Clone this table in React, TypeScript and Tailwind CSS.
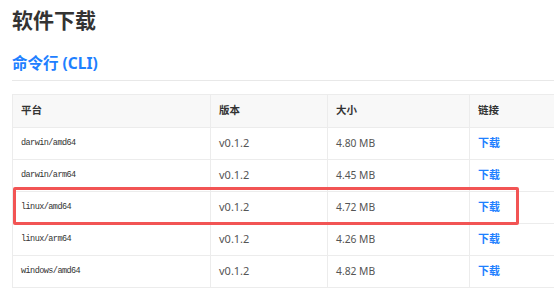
import React from 'react';

interface Release {
  platform: string;
  version: string;
  size: string;
}

const releases: Release[] = [
  { platform: 'darwin/amd64', version: 'v0.1.2', size: '4.80 MB' },
  { platform: 'darwin/arm64', version: 'v0.1.2', size: '4.45 MB' },
  { platform: 'linux/amd64', version: 'v0.1.2', size: '4.72 MB' },
  { platform: 'linux/arm64', version: 'v0.1.2', size: '4.26 MB' },
  { platform: 'windows/amd64', version: 'v0.1.2', size: '4.82 MB' },
];

export default function App() {
  return (
    <div
      className="relative w-[554px] h-[306px] overflow-hidden bg-white pl-3"
      style={{ fontFamily: '"Noto Sans", "Noto Sans CJK SC", sans-serif' }}
    >
      <h1 className="pt-[6px] text-[21px] leading-[28px] font-bold text-[#333]">软件下载</h1>
      <h2 className="mt-[17px] text-[15.5px] leading-[24px] font-bold text-[#1e80ff]">命令行 (CLI)</h2>
      <div className="mt-[5px] h-px w-[560px] bg-[#e8e8e8]" />

      <table className="mt-[13px] w-[600px] table-fixed border-collapse text-[#333]">
        <colgroup>
          <col className="w-[198px]" />
          <col className="w-[117px]" />
          <col className="w-[142px]" />
          <col className="w-[143px]" />
        </colgroup>
        <thead>
          <tr className="h-[33px] bg-[#f8f8f8]">
            <th className="border border-[#ececec] px-2 text-left text-[10.5px] font-bold">平台</th>
            <th className="border border-[#ececec] px-2 text-left text-[10.5px] font-bold">版本</th>
            <th className="border border-[#ececec] px-2 text-left text-[10.5px] font-bold">大小</th>
            <th className="border border-[#ececec] px-2 text-left text-[10.5px] font-bold">链接</th>
          </tr>
        </thead>
        <tbody>
          {releases.map((r) => (
            <tr key={r.platform} className="h-[32px]">
              <td
                className="border border-[#ececec] px-2 text-[8.5px] tracking-[-0.55px] text-[#333]"
                style={{ fontFamily: '"Liberation Mono", "DejaVu Sans Mono", monospace' }}
              >
                {r.platform}
              </td>
              <td className="border border-[#ececec] px-2 text-[11px] text-[#555]">{r.version}</td>
              <td className="border border-[#ececec] px-2 text-[10.3px] text-[#555]">{r.size}</td>
              <td className="border border-[#ececec] px-2 text-[11px] font-bold text-[#1e80ff]">下载</td>
            </tr>
          ))}
        </tbody>
      </table>

      {/* highlight around linux/amd64 */}
      <div className="absolute left-[13px] top-[187px] h-[38px] w-[506px] rounded-[2px] border-[3px] border-[#f25454]" />
    </div>
  );
}
